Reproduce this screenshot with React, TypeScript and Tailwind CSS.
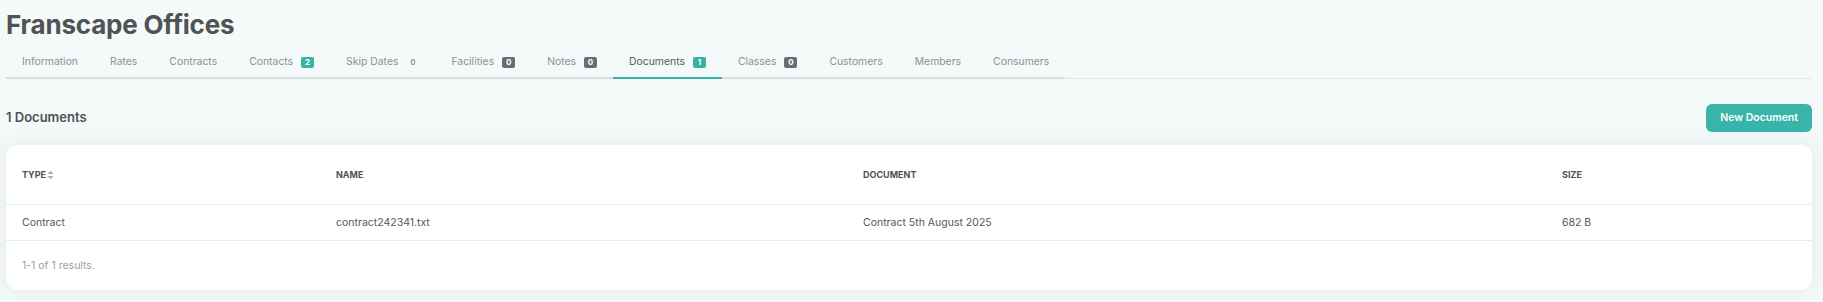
import React from "react";

type Tab = { label: string; badge?: string; kind?: "teal" | "gray" | "plain"; active?: boolean };

const tabs: Tab[] = [
  { label: "Information" },
  { label: "Rates" },
  { label: "Contracts" },
  { label: "Contacts", badge: "2", kind: "teal" },
  { label: "Skip Dates", badge: "0", kind: "plain" },
  { label: "Facilities", badge: "0", kind: "gray" },
  { label: "Notes", badge: "0", kind: "gray" },
  { label: "Documents", badge: "1", kind: "teal", active: true },
  { label: "Classes", badge: "0", kind: "gray" },
  { label: "Customers" },
  { label: "Members" },
  { label: "Consumers" },
];

function Badge({ text, kind }: { text: string; kind: "teal" | "gray" | "plain" }) {
  if (kind === "plain") {
    return <span className="text-[8px] font-semibold text-[#8a9191] w-[13px] h-[11px] flex items-center justify-center">{text}</span>;
  }
  return (
    <span
      className={
        "w-[13px] h-[11px] rounded-[2px] flex items-center justify-center text-[8px] font-bold text-white " +
        (kind === "teal" ? "bg-[#37b3a6]" : "bg-[#676d73]")
      }
    >
      {text}
    </span>
  );
}

function SortIcon() {
  return (
    <svg width="7" height="10" viewBox="0 0 7 10" className="ml-[1px]">
      <path d="M3.5 0.8 L6.3 4 L0.7 4 Z" fill="#a7adad" />
      <path d="M3.5 9.2 L6.3 6 L0.7 6 Z" fill="#a7adad" />
    </svg>
  );
}

export default function App() {
  return (
    <div
      className="w-[1823px] h-[302px] bg-[#f4f9f9] overflow-hidden pl-[6px] pr-[11px]"
      style={{ fontFamily: "Inter, 'Noto Sans', sans-serif" }}
    >
      <div className="h-[47px] flex items-center">
        <h1 className="text-[26px] font-bold leading-none text-[#4f5353] tracking-[-0.2px] pt-[2px]">Franscape Offices</h1>
      </div>

      <div className="flex border-b border-[#e1e8e8]">
        {tabs.map((t) => (
          <div
            key={t.label}
            className={
              "h-[32px] px-4 flex items-center gap-2 border-b-2 -mb-px text-[10.4px] " +
              (t.active ? "border-[#37b3a6] text-[#555b5b]" : "border-[#d9dfdf] text-[#8b9292]")
            }
          >
            <span>{t.label}</span>
            {t.badge && t.kind && <Badge text={t.badge} kind={t.kind} />}
          </div>
        ))}
      </div>

      <div className="mt-[25px] h-[28px] flex items-center justify-between">
        <div className="text-[13px] font-semibold text-[#4d5252]">1 Documents</div>
        <button className="h-[28px] px-[14px] rounded-[6px] bg-[#38b4a8] text-white text-[10.5px] font-semibold">
          New Document
        </button>
      </div>

      <div className="mt-[13px] bg-white rounded-[12px] shadow-[0_0_24px_rgba(20,60,60,0.08)]">
        <div className="h-[60px] flex items-center border-b border-[#e8ecec] text-[9px] font-bold text-[#4d5252] uppercase">
          <div className="w-[314px] px-4 flex items-center">TYPE<SortIcon /></div>
          <div className="w-[527px] px-4">NAME</div>
          <div className="w-[699px] px-4">DOCUMENT</div>
          <div className="flex-1 px-4">SIZE</div>
        </div>
        <div className="h-[36px] flex items-center border-b border-[#e8ecec] text-[10.5px] text-[#525858]">
          <div className="w-[314px] px-4">Contract</div>
          <div className="w-[527px] px-4">contract242341.txt</div>
          <div className="w-[699px] px-4">Contract 5th August 2025</div>
          <div className="flex-1 px-4">682 B</div>
        </div>
        <div className="h-[49px] flex items-center px-4 text-[10.5px] text-[#9ba2a2]">1-1 of 1 results.</div>
      </div>
    </div>
  );
}
